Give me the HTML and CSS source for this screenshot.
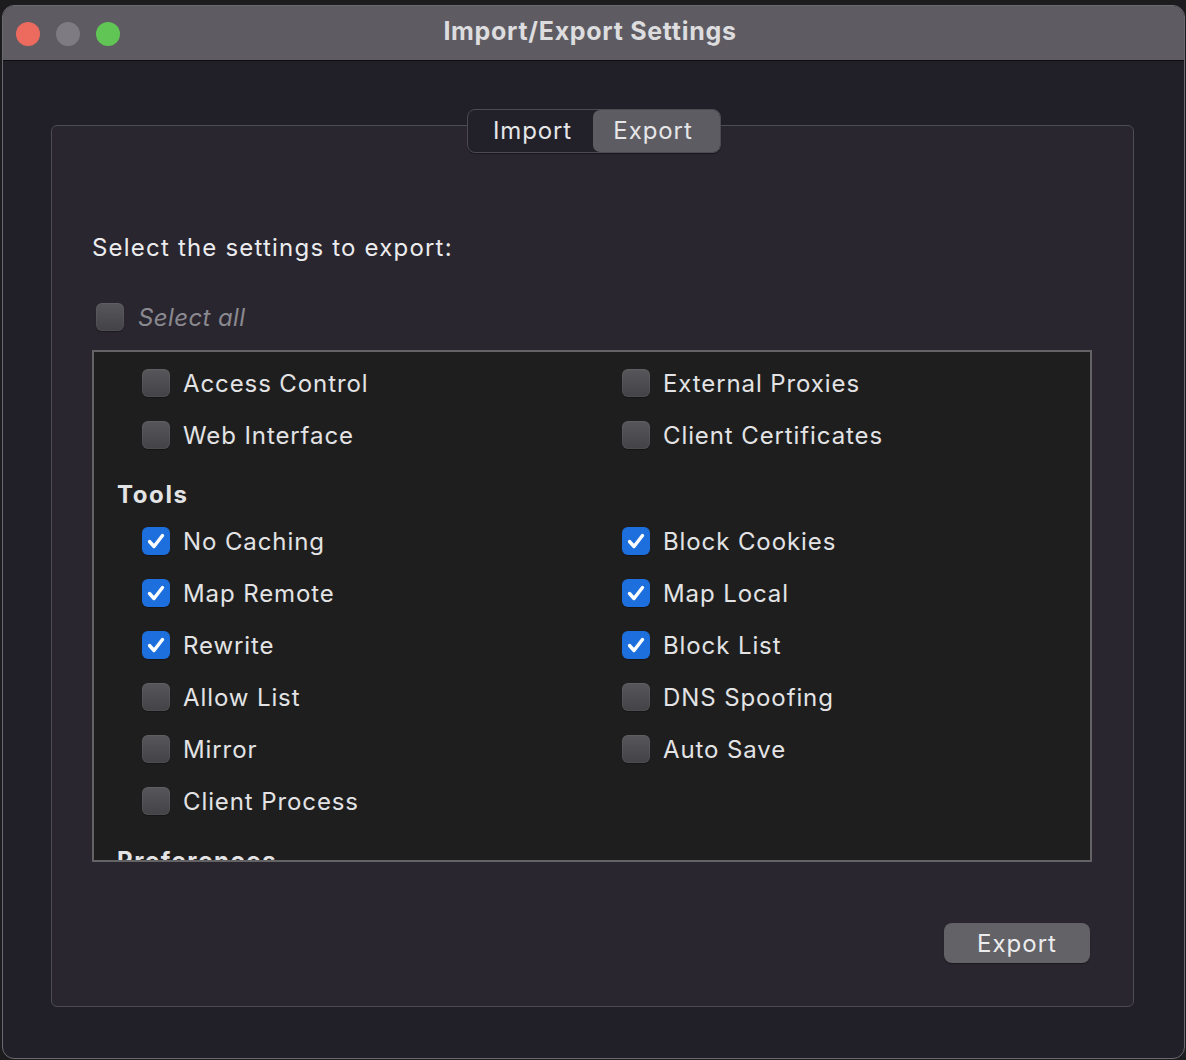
FILE: index.html
```html
<!DOCTYPE html>
<html>
<head>
<meta charset="utf-8">
<link rel="stylesheet" href="styles.css">
</head>
<body>
<div class="window">
  <div class="titlebar">
    <div class="lights">
      <span class="light red"></span>
      <span class="light gray"></span>
      <span class="light green"></span>
    </div>
    <div class="title">Import/Export Settings</div>
    <div></div>
  </div>
  <div class="body">
    <div class="group">
      <div class="segmented">
        <div class="seg">Import</div>
        <div class="seg selected">Export</div>
      </div>
      <div class="prompt">Select the settings to export:</div>
      <label class="selectall">
        <span class="cb"></span>
        <span class="sa-text">Select all</span>
      </label>
      <div class="list">
        <div class="list-inner">
          <div class="grid">
            <div class="item"><span class="cb"></span>Access Control</div>
            <div class="item"><span class="cb"></span>External Proxies</div>
            <div class="item"><span class="cb"></span>Web Interface</div>
            <div class="item"><span class="cb"></span>Client Certificates</div>
          </div>
          <div class="heading">Tools</div>
          <div class="grid">
            <div class="item"><span class="cb on"><svg viewBox="0 0 28 28"><path d="M7.5 14.5 L12 19.5 L20.5 8.5"/></svg></span>No Caching</div>
            <div class="item"><span class="cb on"><svg viewBox="0 0 28 28"><path d="M7.5 14.5 L12 19.5 L20.5 8.5"/></svg></span>Block Cookies</div>
            <div class="item"><span class="cb on"><svg viewBox="0 0 28 28"><path d="M7.5 14.5 L12 19.5 L20.5 8.5"/></svg></span>Map Remote</div>
            <div class="item"><span class="cb on"><svg viewBox="0 0 28 28"><path d="M7.5 14.5 L12 19.5 L20.5 8.5"/></svg></span>Map Local</div>
            <div class="item"><span class="cb on"><svg viewBox="0 0 28 28"><path d="M7.5 14.5 L12 19.5 L20.5 8.5"/></svg></span>Rewrite</div>
            <div class="item"><span class="cb on"><svg viewBox="0 0 28 28"><path d="M7.5 14.5 L12 19.5 L20.5 8.5"/></svg></span>Block List</div>
            <div class="item"><span class="cb"></span>Allow List</div>
            <div class="item"><span class="cb"></span>DNS Spoofing</div>
            <div class="item"><span class="cb"></span>Mirror</div>
            <div class="item"><span class="cb"></span>Auto Save</div>
            <div class="item"><span class="cb"></span>Client Process</div>
          </div>
          <div class="heading">Preferences</div>
        </div>
      </div>
      <div class="footer">
        <button class="btn">Export</button>
      </div>
    </div>
  </div>
</div>
</body>
</html>
```

FILE: styles.css
```css
* { box-sizing: border-box; }

html, body {
  margin: 0;
  padding: 0;
  background: #1c1c1e;
  font-family: "Inter", "Noto Sans", sans-serif;
  color: #e2e2e4;
}

.window {
  margin: 5px 1px 0 2px;
  height: 1054px;
  border: 1px solid #6b6a70;
  border-radius: 12px;
  overflow: hidden;
  display: flex;
  flex-direction: column;
  background: #211f27;
}

.titlebar {
  height: 55px;
  flex: none;
  background: #5e5c62;
  border-bottom: 1px solid #0e0e10;
  display: grid;
  grid-template-columns: 1fr auto 1fr;
  align-items: center;
}

.lights {
  display: flex;
  gap: 16px;
  padding-left: 13px;
  padding-top: 1px;
}

.light {
  width: 24px;
  height: 24px;
  border-radius: 50%;
  display: block;
}
.light.red { background: #ed6a5e; }
.light.gray { background: #7e7c82; }
.light.green { background: #61c555; }

.title {
  font-size: 25px;
  font-weight: 700;
  color: #dddcdf;
  letter-spacing: 0.7px;
  padding-bottom: 4px;
  margin-left: -7px;
}

.body {
  flex: 1;
  padding: 64px 50px 51px 48px;
  display: flex;
}

.group {
  flex: 1;
  border: 1px solid #4e4c53;
  border-radius: 6px;
  background: #29262f;
  display: flex;
  flex-direction: column;
  padding: 0 41px 0 40px;
}

.segmented {
  align-self: center;
  margin-top: -17px;
  margin-left: 3px;
  display: flex;
  height: 44px;
  border: 1px solid #4d4b52;
  border-radius: 8px;
  background: #222028;
  box-shadow: 0 1px 1px rgba(0,0,0,0.35);
}

.seg {
  font-size: 24px;
  line-height: 42px;
  color: #e6e6e8;
  padding: 0 0 0 5px;
  width: 125px;
  text-align: center;
  letter-spacing: 0.9px;
}
.seg.selected {
  background: #5e5c63;
  border-radius: 7px;
  width: 127px;
  padding: 0 6px 0 0;
}

.prompt {
  font-size: 24px;
  line-height: 30px;
  margin-top: 80px;
  color: #ececee;
  letter-spacing: 1.2px;
}

.selectall {
  display: flex;
  align-items: center;
  gap: 14px;
  margin-top: 40px;
  margin-left: 4px;
  height: 28px;
}
.sa-text {
  font-size: 24px;
  font-style: italic;
  color: #8b8990;
  letter-spacing: 0.4px;
}

.cb {
  width: 28px;
  height: 28px;
  border-radius: 6px;
  flex: none;
  display: inline-flex;
  align-items: center;
  justify-content: center;
  background: linear-gradient(#57565b, #434247);
  box-shadow: inset 0 0 0 1px rgba(255,255,255,0.05), 0 1px 1px rgba(0,0,0,0.3);
}
.cb.on {
  background: #1e6fde;
  box-shadow: 0 1px 1px rgba(0,0,0,0.3);
}
.cb svg {
  width: 28px;
  height: 28px;
}
.cb svg path {
  fill: none;
  stroke: #ffffff;
  stroke-width: 3.4;
  stroke-linecap: round;
  stroke-linejoin: round;
}

.list {
  margin-top: 19px;
  height: 512px;
  border: 2px solid #636366;
  background: #1e1e1e;
  overflow: hidden;
}

.list-inner {
  padding-top: 5px;
}

.grid {
  display: grid;
  grid-template-columns: 480px 1fr;
  padding-left: 48px;
}

.item {
  height: 52px;
  display: flex;
  align-items: center;
  gap: 13px;
  font-size: 24px;
  color: #e3e3e5;
  letter-spacing: 0.9px;
}

.heading {
  font-size: 24px;
  font-weight: 700;
  line-height: 30px;
  padding: 19px 0 5px 23px;
  color: #e3e3e5;
  letter-spacing: 1.6px;
}

.footer {
  display: flex;
  justify-content: flex-end;
  margin-top: 61px;
  padding-right: 2px;
}

.btn {
  width: 146px;
  height: 40px;
  border: none;
  border-radius: 8px;
  background: #636267;
  color: #ececee;
  font-family: "Inter", "Noto Sans", sans-serif;
  font-size: 24px;
  padding: 0;
  letter-spacing: 1px;
  box-shadow: 0 1px 1px rgba(0,0,0,0.35);
}
```
